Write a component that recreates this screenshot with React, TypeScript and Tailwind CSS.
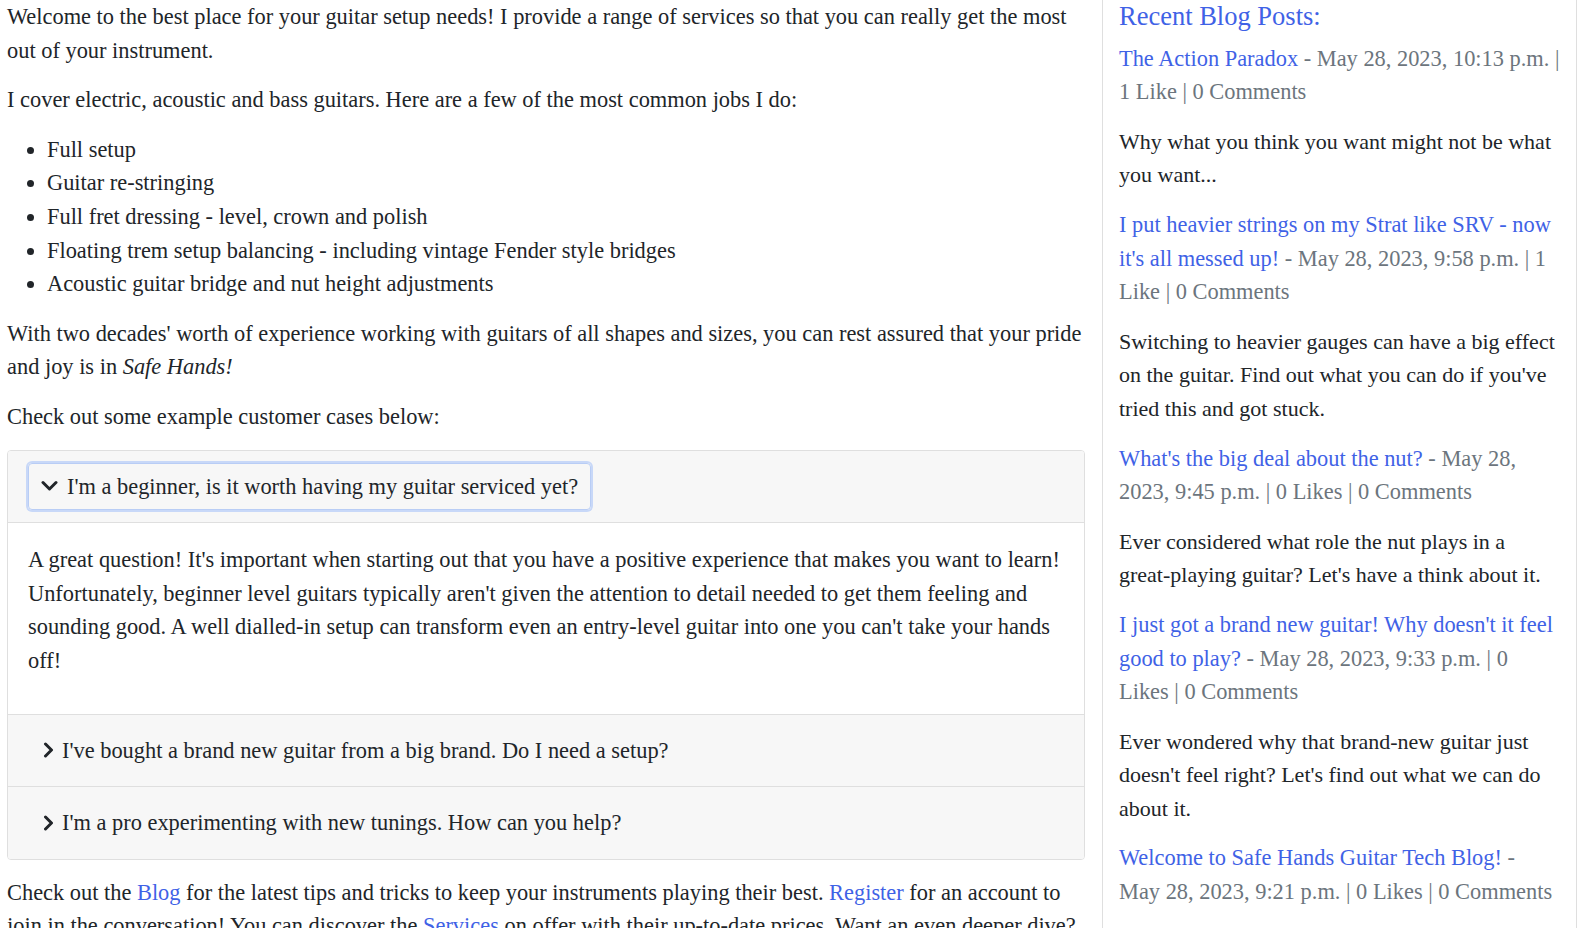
import React from 'react';

const serif = { fontFamily: '"Liberation Serif", "Times New Roman", serif' };

interface Post {
  title: string;
  meta: string;
  summary?: string;
}

const posts: Post[] = [
  {
    title: 'The Action Paradox',
    meta: 'May 28, 2023, 10:13 p.m. | 1 Like | 0 Comments',
    summary: 'Why what you think you want might not be what you want...',
  },
  {
    title: "I put heavier strings on my Strat like SRV - now it's all messed up!",
    meta: 'May 28, 2023, 9:58 p.m. | 1 Like | 0 Comments',
    summary:
      "Switching to heavier gauges can have a big effect on the guitar. Find out what you can do if you've tried this and got stuck.",
  },
  {
    title: "What's the big deal about the nut?",
    meta: 'May 28, 2023, 9:45 p.m. | 0 Likes | 0 Comments',
    summary: "Ever considered what role the nut plays in a great-playing guitar? Let's have a think about it.",
  },
  {
    title: "I just got a brand new guitar! Why doesn't it feel good to play?",
    meta: 'May 28, 2023, 9:33 p.m. | 0 Likes | 0 Comments',
    summary: "Ever wondered why that brand-new guitar just doesn't feel right? Let's find out what we can do about it.",
  },
  {
    title: 'Welcome to Safe Hands Guitar Tech Blog!',
    meta: 'May 28, 2023, 9:21 p.m. | 0 Likes | 0 Comments',
  },
];

const jobs = [
  'Full setup',
  'Guitar re-stringing',
  'Full fret dressing - level, crown and polish',
  'Floating trem setup balancing - including vintage Fender style bridges',
  'Acoustic guitar bridge and nut height adjustments',
];

const ChevronDown = () => (
  <svg width="17" height="12" viewBox="0 0 17 12" className="shrink-0">
    <polyline points="2,2.5 8.5,9 15,2.5" fill="none" stroke="#212529" strokeWidth="3" strokeLinecap="round" strokeLinejoin="round" />
  </svg>
);

const ChevronRight = () => (
  <svg width="11" height="16" viewBox="0 0 11 16" className="shrink-0">
    <polyline points="2.5,2 8.5,8 2.5,14" fill="none" stroke="#212529" strokeWidth="3" strokeLinecap="round" strokeLinejoin="round" />
  </svg>
);

const CaseHeader: React.FC<{ open?: boolean; last?: boolean; children: React.ReactNode }> = ({ open, last, children }) => (
  <div className={`bg-[#f7f7f7] px-5 py-3 ${last ? '' : 'border-b border-[#dfdfdf]'}`}>
    <button
      className={`flex items-center rounded px-3 py-[6px] border text-left text-[#212529] ${
        open ? 'border-[#b9cdf5] shadow-[0_0_0_2px_#c8d8f8] gap-[9px] pl-[12px]' : 'border-transparent gap-[8px] pl-[14px]'
      }`}
    >
      {open ? <ChevronDown /> : <ChevronRight />}
      <span>{children}</span>
    </button>
  </div>
);

const Link: React.FC<{ children: React.ReactNode }> = ({ children }) => (
  <a href="#" className="text-[#3f62e6]">
    {children}
  </a>
);

export default function App() {
  return (
    <div className="bg-white text-[#212529] text-[22.4px] leading-[33.6px] min-h-screen" style={serif}>
      <div className="flex gap-[17px] px-[7px]">
        <main className="flex-1 min-w-0">
          <p className="mb-4">
            Welcome to the best place for your guitar setup needs! I provide a range of services so that you can really get the most out of your instrument.
          </p>
          <p className="mb-4">I cover electric, acoustic and bass guitars. Here are a few of the most common jobs I do:</p>
          <ul className="list-disc pl-10 mb-4">
            {jobs.map((job) => (
              <li key={job}>{job}</li>
            ))}
          </ul>
          <p className="mb-4">
            With two decades' worth of experience working with guitars of all shapes and sizes, you can rest assured that your pride and joy is in{' '}
            <em>Safe Hands!</em>
          </p>
          <p className="mb-4">Check out some example customer cases below:</p>

          <div className="border border-[#dfdfdf] rounded overflow-hidden mb-4">
            <CaseHeader open>I'm a beginner, is it worth having my guitar serviced yet?</CaseHeader>
            <div className="px-5 pt-5 pb-5 border-b border-[#dfdfdf]">
              <p className="mb-4">
                A great question! It's important when starting out that you have a positive experience that makes you want to learn! Unfortunately, beginner level guitars typically aren't given the attention to detail needed to get them feeling and sounding good. A well dialled-in setup can transform even an entry-level guitar into one you can't take your hands off!
              </p>
            </div>
            <CaseHeader>I've bought a brand new guitar from a big brand. Do I need a setup?</CaseHeader>
            <CaseHeader last>I'm a pro experimenting with new tunings. How can you help?</CaseHeader>
          </div>

          <p className="mb-4">
            Check out the <Link>Blog</Link> for the latest tips and tricks to keep your instruments playing their best. <Link>Register</Link> for an account to join in the conversation! You can discover the <Link>Services</Link> on offer with their up-to-date prices. Want an even deeper dive? Get in touch and book your guitar in today!
          </p>
        </main>

        <aside className="w-[475px] shrink-0 border-x border-[#dfdfdf] px-4 min-h-screen">
          <h3 className="text-[26.5px] leading-[33.6px] text-[#3f62e6] mb-2">Recent Blog Posts:</h3>
          {posts.map((post) => (
            <div key={post.title}>
              <p className="mb-4 text-[#6c757d]">
                <Link>{post.title}</Link> - {post.meta}
              </p>
              {post.summary && <p className="mb-4 text-[22px]">{post.summary}</p>}
            </div>
          ))}
        </aside>
      </div>
    </div>
  );
}
